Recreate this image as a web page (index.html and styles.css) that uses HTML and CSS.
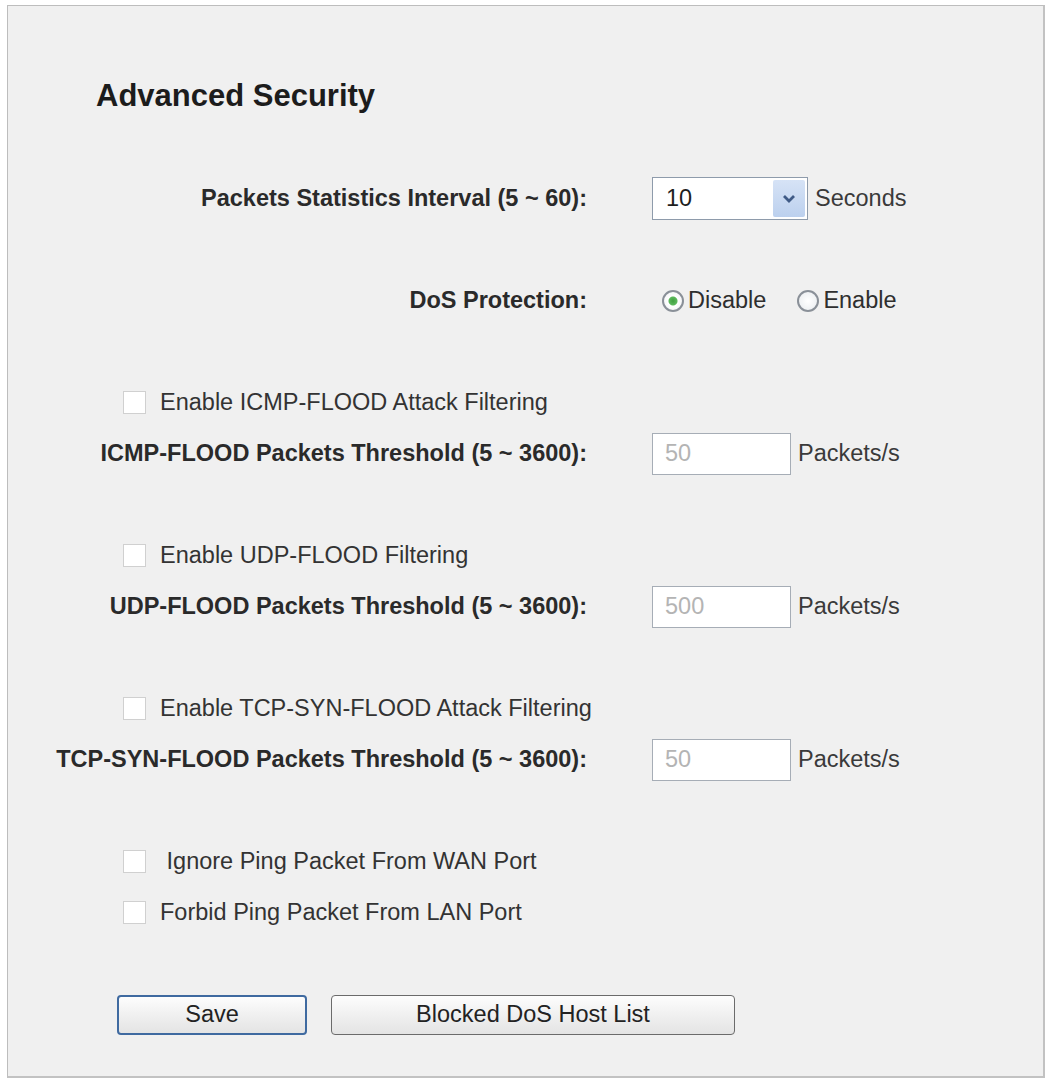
FILE: index.html
```html
<!DOCTYPE html>
<html lang="en">
<head>
    <meta charset="UTF-8">
    <meta name="viewport" content="width=device-width, initial-scale=1.0">
    <title>Advanced Security</title>
    <link rel="stylesheet" href="styles.css">
</head>
<body>
    <div class="panel">
        <h1 class="title">Advanced Security</h1>

        <div class="form">
            <div class="row">
                <div class="label">Packets Statistics Interval (5 ~ 60):</div>
                <div class="field">
                    <span class="select">
                        <span class="select-value">10</span>
                        <span class="select-arrow">
                            <svg width="14" height="9" viewBox="0 0 14 9">
                                <path d="M2 2 L7 7 L12 2" fill="none" stroke="#3f5a86" stroke-width="2.8"/>
                            </svg>
                        </span>
                    </span>
                    <span class="unit">Seconds</span>
                </div>
            </div>
            <div class="spacer"></div>

            <div class="row">
                <div class="label">DoS Protection:</div>
                <div class="field">
                    <label class="radio"><input type="radio" name="dos" checked>Disable</label>
                    <label class="radio"><input type="radio" name="dos">Enable</label>
                </div>
            </div>
            <div class="spacer"></div>

            <label class="check-row"><input type="checkbox">Enable ICMP-FLOOD Attack Filtering</label>
            <div class="row">
                <div class="label">ICMP-FLOOD Packets Threshold (5 ~ 3600):</div>
                <div class="field">
                    <input class="num" type="text" value="50" disabled>
                    <span class="unit">Packets/s</span>
                </div>
            </div>
            <div class="spacer"></div>

            <label class="check-row"><input type="checkbox">Enable UDP-FLOOD Filtering</label>
            <div class="row">
                <div class="label">UDP-FLOOD Packets Threshold (5 ~ 3600):</div>
                <div class="field">
                    <input class="num" type="text" value="500" disabled>
                    <span class="unit">Packets/s</span>
                </div>
            </div>
            <div class="spacer"></div>

            <label class="check-row"><input type="checkbox">Enable TCP-SYN-FLOOD Attack Filtering</label>
            <div class="row">
                <div class="label">TCP-SYN-FLOOD Packets Threshold (5 ~ 3600):</div>
                <div class="field">
                    <input class="num" type="text" value="50" disabled>
                    <span class="unit">Packets/s</span>
                </div>
            </div>
            <div class="spacer"></div>

            <label class="check-row"><input type="checkbox">&nbsp;Ignore Ping Packet From WAN Port</label>
            <label class="check-row"><input type="checkbox">Forbid Ping Packet From LAN Port</label>
            <div class="spacer"></div>

            <div class="buttons">
                <button class="btn btn-default" type="button">Save</button>
                <button class="btn btn-wide" type="button">Blocked DoS Host List</button>
            </div>
        </div>
    </div>
</body>
</html>
```

FILE: styles.css
```css
body {
    margin: 0;
    padding: 5px 0 0 7px;
    background-color: #fff;
    font-family: "Liberation Sans", Arial, sans-serif;
    font-size: 23.5px;
    color: #333;
}
.panel {
    box-sizing: border-box;
    width: 1038px;
    height: 1073px;
    background-color: #f0f0f0;
    border: 1px solid #bdbdbd;
    border-right: 2px solid #c2c2c2;
    border-bottom: 2px solid #c2c2c2;
}
.title {
    margin: 0;
    padding: 72px 0 0 88px;
    font-size: 31px;
    line-height: 36px;
    font-weight: bold;
    color: #1c1c1c;
}
.form {
    margin-top: 59px;
}
.row {
    display: grid;
    grid-template-columns: 579px 1fr;
    column-gap: 65px;
    align-items: center;
    height: 51px;
}
.spacer {
    height: 51px;
}
.label {
    text-align: right;
    font-weight: bold;
    color: #2a2a2a;
}
.field {
    display: flex;
    align-items: center;
}
.unit {
    margin-left: 7px;
    color: #3a3a3a;
}
.select {
    display: flex;
    box-sizing: border-box;
    width: 156px;
    height: 43px;
    padding: 2px;
    background-color: #fff;
    border: 1px solid #8e9bab;
}
.select-value {
    flex: 1;
    display: flex;
    align-items: center;
    padding-left: 11px;
    color: #1e1e1e;
}
.select-arrow {
    width: 32px;
    display: flex;
    align-items: center;
    justify-content: center;
    border-radius: 2px;
    background: linear-gradient(#d6e3f6, #bcd0ee);
}
.radio {
    display: inline-flex;
    align-items: center;
    color: #2e2e2e;
    margin-right: 21px;
}
.radio input {
    appearance: none;
    box-sizing: border-box;
    width: 22px;
    height: 22px;
    margin: 0 4px 0 10px;
    border: 2px solid #8a9098;
    border-radius: 50%;
    background: radial-gradient(circle, #fff 0, #e8ebee 100%);
}
.radio + .radio input {
    margin-left: 10px;
}
.radio input:checked {
    background: radial-gradient(circle, #3f9f3f 0, #5cb85c 4px, #fff 5px, #eef0f3 100%);
}
.check-row {
    display: flex;
    align-items: center;
    height: 51px;
    padding-left: 115px;
    color: #333;
}
.check-row input {
    appearance: none;
    box-sizing: border-box;
    width: 23px;
    height: 23px;
    margin: 0 14px 0 0;
    border: 1px solid #d0d0d0;
    background-color: #fff;
}
.num {
    box-sizing: border-box;
    width: 139px;
    height: 42px;
    margin: 0;
    padding: 0 12px;
    font-family: inherit;
    font-size: 23.5px;
    color: #b4b4b4;
    background-color: #fff;
    border: 1px solid #a6adb6;
}
.buttons {
    display: flex;
    align-items: center;
    height: 51px;
    padding-left: 109px;
    gap: 24px;
}
.btn {
    box-sizing: border-box;
    height: 40px;
    padding: 0;
    font-family: inherit;
    font-size: 23.5px;
    color: #222;
    border: 1px solid #6b6b6b;
    border-radius: 4px;
    background: linear-gradient(#fdfdfd, #f0f0f0 50%, #e4e4e4);
}
.btn-default {
    width: 190px;
    border: 2px solid #3f6aa0;
}
.btn-wide {
    width: 404px;
}
```
